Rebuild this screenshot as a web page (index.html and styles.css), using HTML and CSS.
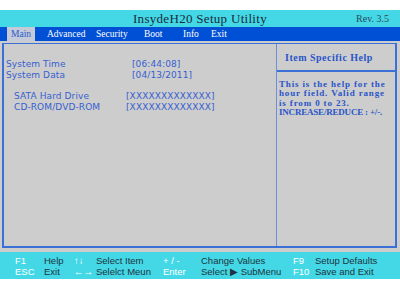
FILE: index.html
```html
<!DOCTYPE html>
<html lang="en">
  <head>
    <meta charset="UTF-8" />
    <title>InsydeH20 Setup Utility</title>
    <link rel="stylesheet" href="styles.css">
  </head>
  <body>
    <div class="screen">
      <div class="titlebar">
        <span></span>
        <h1>InsydeH20 Setup Utility</h1>
        <span class="rev">Rev. 3.5</span>
      </div>
      <div class="menubar">
        <span class="tab active">Main</span>
        <span class="tab">Advanced</span>
        <span class="tab">Security</span>
        <span class="tab">Boot</span>
        <span class="tab">Info</span>
        <span class="tab">Exit</span>
      </div>
      <div class="main">
        <div class="frame">
          <div class="settings">
            <div class="row"><span class="label">System Time</span><span class="value">[06:44:08]</span></div>
            <div class="row"><span class="label">System Data</span><span class="value">[04/13/2011]</span></div>
            <div class="row sub first"><span class="label">SATA Hard Drive</span><span class="value">[XXXXXXXXXXXXX]</span></div>
            <div class="row sub"><span class="label">CD-ROM/DVD-ROM</span><span class="value">[XXXXXXXXXXXXX]</span></div>
          </div>
          <div class="help">
            <h2>Item Specific Help</h2>
            <p>This is the help for the<br>hour field. Valid range<br>is from 0 to 23.<br><span class="caps">INCREASE/REDUCE : +/-.</span></p>
          </div>
        </div>
      </div>
      <div class="footer">
        <span class="key">F1</span><span class="desc">Help</span>
        <span class="key">&#8593;&#8595;</span><span class="desc">Select Item</span>
        <span class="key">+ / -</span><span class="desc">Change Values</span>
        <span class="key">F9</span><span class="desc">Setup Defaults</span>
        <span class="key">ESC</span><span class="desc">Exit</span>
        <span class="key">&#8592;&#8594;</span><span class="desc">Selelct Meun</span>
        <span class="key">Enter</span><span class="desc">Select &#9654; SubMenu</span>
        <span class="key">F10</span><span class="desc">Save and Exit</span>
      </div>
    </div>
  </body>
</html>
```

FILE: styles.css
```css
body {
  margin: 0;
  background-color: #fff;
}

.screen {
  padding-top: 10px;
  width: 400px;
}

.titlebar {
  display: grid;
  grid-template-columns: 1fr auto 1fr;
  align-items: center;
  height: 17px;
  background-color: #44d8e6;
  font-family: "Liberation Serif", serif;
  color: #1a2a3a;
}

.titlebar h1 {
  margin: 0;
  font-size: 13px;
  font-weight: normal;
  letter-spacing: 0.3px;
}

.rev {
  justify-self: end;
  padding-right: 11px;
  font-size: 10px;
  color: #2a4a5a;
}

.menubar {
  display: grid;
  grid-template-columns: 40px 49px 48px 39px 28px auto;
  height: 14px;
  padding-left: 7px;
  background-color: #0050d6;
  font-family: "Liberation Serif", serif;
  font-size: 9.5px;
  color: #fff;
}

.tab {
  display: flex;
  align-items: center;
}

.tab.active {
  justify-content: center;
  width: 28px;
  background-color: #c4cad8;
  color: #2a5cc8;
}

.main {
  height: 211px;
  padding: 2px 3px 4px 2px;
  box-sizing: border-box;
  background-color: #cdcdcd;
}

.frame {
  display: flex;
  height: 100%;
  border: 2px solid #3a70d8;
  border-top-width: 1px;
  box-sizing: border-box;
}

.settings {
  flex: none;
  width: 273px;
  box-sizing: border-box;
  padding: 14px 0 0 2px;
  border-right: 1px solid #6a90d8;
  font-family: "DejaVu Sans", sans-serif;
  font-size: 9px;
  color: #3560d0;
}

.row {
  display: flex;
  height: 11px;
  align-items: center;
}

.row .label {
  width: 126px;
  letter-spacing: 0.1px;
}

.row .value {
  letter-spacing: 0.1px;
}

.row.sub .label {
  width: 112px;
  padding-left: 8px;
}

.row.first {
  margin-top: 10px;
}

.help {
  flex: 1;
  min-width: 0;
  font-family: "Liberation Serif", serif;
  color: #2a55c8;
}

.help h2 {
  margin: 0;
  height: 26px;
  line-height: 28px;
  padding-left: 8px;
  border-bottom: 2px solid #3a70d8;
  font-size: 10px;
  font-weight: bold;
  letter-spacing: 0.5px;
}

.help p {
  margin: 8px 0 0 2px;
  font-size: 9px;
  font-weight: bold;
  line-height: 9.3px;
  letter-spacing: 0.85px;
  white-space: nowrap;
}

.help .caps {
  letter-spacing: -0.2px;
}

.footer {
  display: grid;
  grid-template-columns: 29px 30px 22px 67px 38px 92px 22px auto;
  align-content: center;
  height: 27px;
  padding-left: 15px;
  box-sizing: border-box;
  background-color: #44d8e6;
  font-family: "Liberation Sans", sans-serif;
  font-size: 9.5px;
  line-height: 11px;
}

.key {
  color: #fff;
}

.desc {
  color: #1e3440;
}
```
